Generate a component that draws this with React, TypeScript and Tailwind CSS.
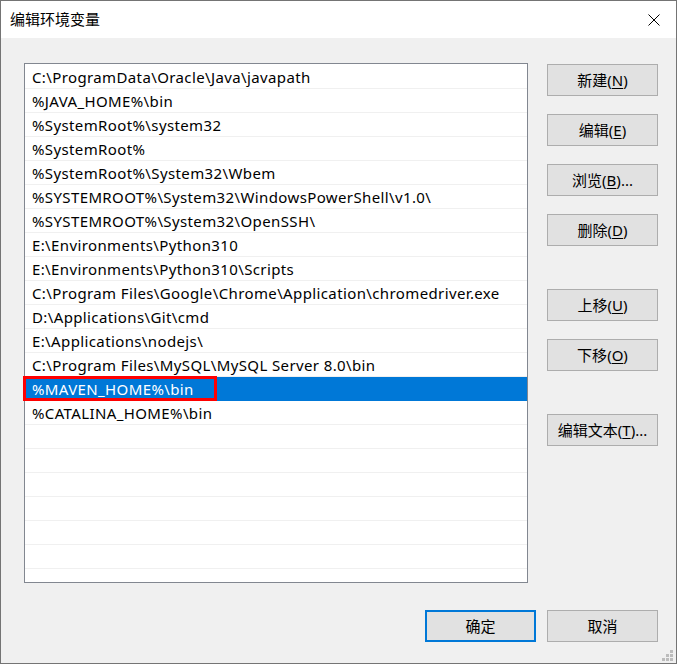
import React from 'react';

const paths = [
  'C:\\ProgramData\\Oracle\\Java\\javapath',
  '%JAVA_HOME%\\bin',
  '%SystemRoot%\\system32',
  '%SystemRoot%',
  '%SystemRoot%\\System32\\Wbem',
  '%SYSTEMROOT%\\System32\\WindowsPowerShell\\v1.0\\',
  '%SYSTEMROOT%\\System32\\OpenSSH\\',
  'E:\\Environments\\Python310',
  'E:\\Environments\\Python310\\Scripts',
  'C:\\Program Files\\Google\\Chrome\\Application\\chromedriver.exe',
  'D:\\Applications\\Git\\cmd',
  'E:\\Applications\\nodejs\\',
  'C:\\Program Files\\MySQL\\MySQL Server 8.0\\bin',
  '%MAVEN_HOME%\\bin',
  '%CATALINA_HOME%\\bin',
];

const SELECTED = 13;

// 按钮：label + 带下划线的快捷键
function WinButton({ label, hotkey, suffix = '', primary = false }: { label: string; hotkey?: string; suffix?: string; primary?: boolean }) {
  return (
    <div
      className={`w-[111px] h-[32px] flex items-center justify-center bg-[#e1e1e1] text-black ${
        primary ? 'border-2 border-[#0078d7]' : 'border border-[#adadad]'
      }`}
    >
      <span>
        {label}
        {hotkey && (
          <>
            (<span className="underline underline-offset-2">{hotkey}</span>)
          </>
        )}
        {suffix}
      </span>
    </div>
  );
}

export default function App() {
  const rows = Array.from({ length: 22 }, (_, i) => paths[i] ?? '');

  return (
    <div
      className="relative w-[677px] h-[664px] flex flex-col bg-[#f0f0f0] border border-[#747474] text-[15px] leading-none"
      style={{ fontFamily: '"Noto Sans", "Noto Sans CJK SC", sans-serif' }}
    >
      {/* 标题栏 */}
      <div className="h-[37px] bg-white flex items-center justify-between pl-[9px] pr-[15px] shrink-0">
        <span className="text-black">编辑环境变量</span>
        <svg width="12" height="12" viewBox="0 0 12 12" className="mr-[1px]">
          <path d="M0.5 0.5 L11.5 11.5 M11.5 0.5 L0.5 11.5" stroke="#000" strokeWidth="1" />
        </svg>
      </div>

      {/* 主体 */}
      <div className="flex-1 flex flex-col pl-[23px] pr-[18px] pt-[25px]">
        <div className="flex gap-[19px]">
          {/* 列表 */}
          <div className="relative">
            <div className="w-[504px] h-[520px] border border-[#828790] bg-white overflow-hidden pt-[1px]">
              {rows.map((p, i) => (
                <div
                  key={i}
                  className={`h-[24px] flex items-center pl-[7px] pt-[1px] whitespace-nowrap tracking-[0.38px] border-b ${
                    i === SELECTED ? 'bg-[#0078d7] text-white border-[#0078d7]' : 'text-black border-[#f0f0f0]'
                  }`}
                >
                  {p}
                </div>
              ))}
            </div>
            {/* 红色标注框 */}
            <div className="absolute left-[-1px] top-[313px] w-[194px] h-[25px] border-[3px] border-[#ff0000] pointer-events-none" />
          </div>

          {/* 右侧按钮 */}
          <div className="flex flex-col pt-[1px]">
            <div className="flex flex-col gap-[18px]">
              <WinButton label="新建" hotkey="N" />
              <WinButton label="编辑" hotkey="E" />
              <WinButton label="浏览" hotkey="B" suffix="..." />
              <WinButton label="删除" hotkey="D" />
            </div>
            <div className="flex flex-col gap-[18px] mt-[43px]">
              <WinButton label="上移" hotkey="U" />
              <WinButton label="下移" hotkey="O" />
            </div>
            <div className="mt-[43px]">
              <WinButton label="编辑文本" hotkey="T" suffix="..." />
            </div>
          </div>
        </div>

        {/* 底部按钮 */}
        <div className="flex justify-end gap-[11px] mt-[27px]">
          <WinButton label="确定" primary />
          <WinButton label="取消" />
        </div>
      </div>

      {/* 调整大小手柄 */}
      <svg width="11" height="11" viewBox="0 0 11 11" className="absolute right-[3px] bottom-[2px]">
        <rect x="8" y="0" width="3" height="3" fill="#bcbcbc" />
        <rect x="4" y="4" width="3" height="3" fill="#bcbcbc" />
        <rect x="8" y="4" width="3" height="3" fill="#bcbcbc" />
        <rect x="0" y="8" width="3" height="3" fill="#bcbcbc" />
        <rect x="4" y="8" width="3" height="3" fill="#bcbcbc" />
        <rect x="8" y="8" width="3" height="3" fill="#bcbcbc" />
      </svg>
    </div>
  );
}
